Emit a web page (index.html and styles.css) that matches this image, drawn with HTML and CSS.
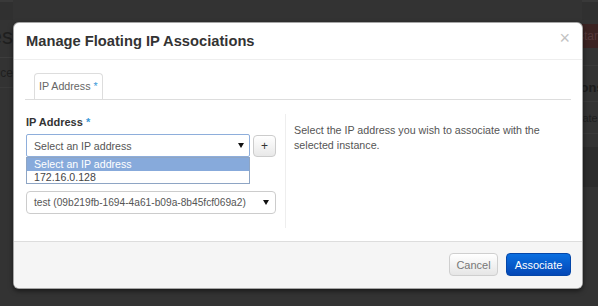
FILE: index.html
```html
<!DOCTYPE html>
<html>
<head>
<meta charset="utf-8">
<link rel="stylesheet" href="styles.css">
</head>
<body>
<div class="page">
  <div class="edge edge-left">
    <div class="topbar"></div>
    <div class="title-row"><span class="page-title">Instances</span></div>
    <div class="bg-row"><span class="bg-text">Instance</span></div>
  </div>
  <div class="center"></div>
  <div class="edge edge-right">
    <div class="topbar"></div>
    <div class="btn-row"><span class="bg-danger">Terminate Instances</span></div>
    <div class="bg-row bg-row-head"><span class="bg-bold">Actions</span></div>
    <div class="bg-row bg-row-small"><span class="bg-text">Associate</span></div>
    <div class="bg-row bg-row-dark"></div>
  </div>
</div>

<div class="modal">
  <div class="modal-header">
    <h3 class="modal-title">Manage Floating IP Associations</h3>
    <span class="close">×</span>
  </div>
  <div class="modal-body">
    <ul class="tabs">
      <li class="tab">IP Address <span class="req">*</span></li>
    </ul>
    <div class="form-row">
      <div class="form-col">
        <div class="group">
          <label class="label">IP Address <span class="req">*</span></label>
          <div class="input-row">
            <div class="select select-focus">
              <span>Select an IP address</span>
              <span class="caret"></span>
              <div class="dropdown">
                <div class="option option-active">Select an IP address</div>
                <div class="option">172.16.0.128</div>
              </div>
            </div>
            <span class="plus-btn">+</span>
          </div>
        </div>
        <div class="group group-second">
          <div class="select select-wide">
            <span class="select-text-narrow">test (09b219fb-1694-4a61-b09a-8b45fcf069a2)</span>
            <span class="caret"></span>
          </div>
        </div>
      </div>
      <div class="help-col">
        <p class="help">Select the IP address you wish to associate with the selected instance.</p>
      </div>
    </div>
  </div>
  <div class="modal-footer">
    <span class="btn btn-default">Cancel</span>
    <span class="btn btn-primary">Associate</span>
  </div>
</div>
</body>
</html>
```
FILE: styles.css
```css
* { box-sizing: border-box; }
html, body {
  margin: 0;
  padding: 0;
  width: 598px;
  height: 306px;
  overflow: hidden;
  background: #333;
  font-family: "Liberation Sans", Arial, sans-serif;
}
.page {
  display: flex;
  width: 598px;
  height: 306px;
}
.edge {
  overflow: hidden;
  display: flex;
  flex-direction: column;
}
.edge-left { width: 13px; }
.edge-right { width: 16px; }
.center { flex: 1; }
.topbar {
  height: 20px;
  background: #303030;
  border-top: 2px solid #393939;
  flex-shrink: 0;
}
.title-row {
  height: 38px;
  display: flex;
  justify-content: flex-end;
  align-items: flex-end;
  padding-bottom: 9px;
  border-bottom: 1px solid #3d3d3d;
  white-space: nowrap;
  flex-shrink: 0;
}
.page-title {
  font-size: 22px;
  line-height: 22px;
  color: #1f1f1f;
}
.bg-row {
  height: 30px;
  display: flex;
  justify-content: flex-end;
  align-items: center;
  white-space: nowrap;
  border-bottom: 1px solid #3a3a3a;
  flex-shrink: 0;
}
.bg-text {
  font-size: 12px;
  color: #1f1f1f;
}
.edge-right .bg-row { justify-content: flex-start; }
.btn-row {
  height: 46px;
  padding-top: 4px;
  border-bottom: 1px solid #3a3a3a;
  flex-shrink: 0;
  white-space: nowrap;
}
.bg-danger {
  display: block;
  height: 24px;
  line-height: 24px;
  background: #3b2322;
  color: #55393a;
  font-size: 12px;
  margin-left: -70px;
}
.bg-row-head {
  height: 36px;
  padding-top: 8px;
}
.bg-bold {
  font-weight: bold;
  font-size: 13px;
  color: #1c1c1c;
  margin-left: -26px;
}
.bg-row-small { height: 32px; }
.bg-row-small .bg-text { margin-left: -32px; font-size: 11px; }
.bg-row-dark {
  height: 40px;
  background: #2c2c2c;
  border-bottom: none;
  margin-top: 13px;
}

/* modal */
.modal {
  position: absolute;
  left: 13px;
  top: 22px;
  width: 570px;
  height: 267px;
  background: #fff;
  border: 1px solid rgba(0, 0, 0, 0.35);
  border-radius: 6px;
  box-shadow: 0 2px 5px rgba(0, 0, 0, 0.55);
  display: flex;
  flex-direction: column;
  overflow: hidden;
}
.modal-header {
  height: 37px;
  flex-shrink: 0;
  border-bottom: 1px solid #eee;
  display: flex;
  align-items: center;
  padding: 0 12px;
}
.modal-title {
  flex: 1;
  margin: 0;
  font-size: 14.7px;
  font-weight: bold;
  color: #333;
}
.close {
  font-size: 18px;
  line-height: 18px;
  color: #c2c2c2;
  margin-bottom: 6px;
}
.modal-body {
  flex: 1;
  padding: 13px 11px 0 11px;
}
.tabs {
  list-style: none;
  margin: 0;
  padding: 0 0 0 9px;
  height: 27px;
  border-bottom: 1px solid #ddd;
  display: flex;
}
.tab {
  height: 26px;
  line-height: 25px;
  padding: 0 4px;
  border: 1px solid #ddd;
  border-bottom: none;
  border-radius: 4px 4px 0 0;
  font-size: 10.7px;
  color: #666;
}
.req { color: #3a9ad9; }
.form-row {
  display: flex;
  margin-top: 14px;
  padding-left: 1px;
}
.form-col {
  width: 250px;
  padding-bottom: 14px;
}
.label {
  display: block;
  font-size: 11px;
  font-weight: bold;
  line-height: 16px;
  margin-bottom: 4px;
  color: #333;
}
.input-row {
  display: flex;
  gap: 3px;
}
.select {
  position: relative;
  height: 23px;
  border: 1px solid #ccc;
  border-radius: 3px;
  background: #fff;
  display: flex;
  align-items: center;
  justify-content: space-between;
  padding: 0 5px 0 7px;
  font-size: 10.6px;
  color: #555;
  white-space: nowrap;
}
.select-focus {
  width: 224px;
  border-color: #8eaedb;
  border-radius: 2px;
}
.select-wide {
  width: 250px;
  padding-right: 6px;
  border-radius: 4px;
}
.select-text-narrow { font-size: 10.2px; }
.caret {
  width: 0;
  height: 0;
  border-left: 3px solid transparent;
  border-right: 3px solid transparent;
  border-top: 5px solid #111;
}
.dropdown {
  position: absolute;
  left: -1px;
  right: -1px;
  top: 22px;
  background: #fff;
  border: 1px solid #8ea5c4;
  z-index: 2;
}
.option {
  height: 12px;
  line-height: 12px;
  padding-left: 7px;
  font-size: 10.6px;
  color: #444;
}
.option-active {
  height: 13px;
  line-height: 13px;
  background: #87aadb;
  color: #fff;
}
.plus-btn {
  width: 23px;
  height: 22px;
  margin-top: 1px;
  border: 1px solid #ccc;
  border-radius: 4px;
  background: linear-gradient(#fff, #e8e8e8);
  display: flex;
  align-items: center;
  justify-content: center;
  font-size: 12px;
  color: #333;
}
.group-second { margin-top: 34px; }
.help-col {
  margin-left: 9px;
  border-left: 1px solid #eee;
  padding: 9px 0 0 8px;
  flex: 1;
}
.help {
  margin: 0;
  font-size: 10.7px;
  line-height: 15px;
  color: #555;
}
.modal-footer {
  height: 47px;
  flex-shrink: 0;
  border-top: 1px solid #ddd;
  background: #f5f5f5;
  display: flex;
  justify-content: flex-end;
  align-items: flex-start;
  gap: 8px;
  padding: 11px 11px 0 0;
}
.btn {
  height: 23px;
  display: flex;
  align-items: center;
  justify-content: center;
  font-size: 11px;
  border-radius: 4px;
}
.btn-default {
  width: 49px;
  border: 1px solid #cfcfcf;
  background: linear-gradient(#fff, #e6e6e6);
  color: #777;
}
.btn-primary {
  width: 65px;
  border: 1px solid #0446a8;
  background: linear-gradient(#0a6fe0, #0447b6);
  color: #fff;
}
```
